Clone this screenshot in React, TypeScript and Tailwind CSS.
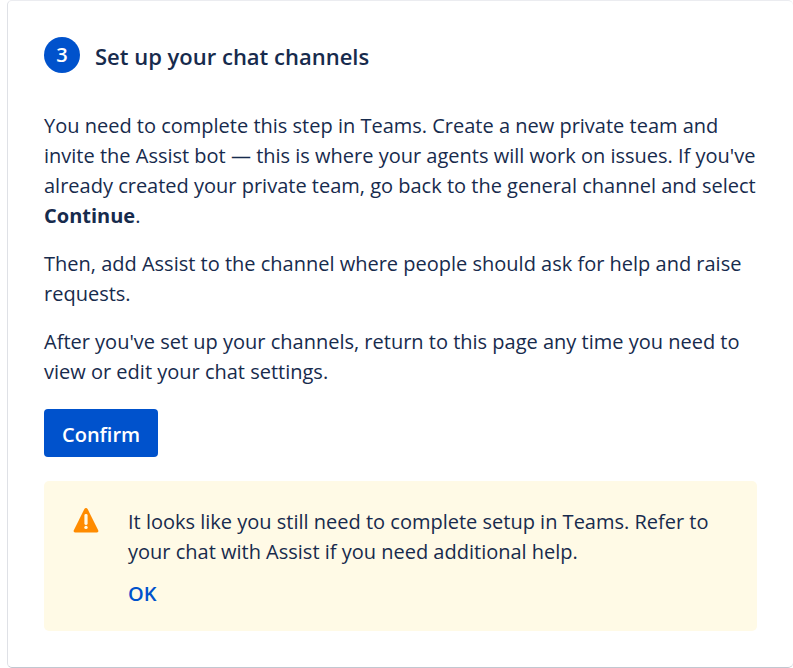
function WarningIcon() {
  return (
    <svg className="mt-px h-[25px] w-[26px] shrink-0" viewBox="0 0 26 25" aria-hidden="true">
      <path
        d="M11.4 1.1a1.8 1.8 0 0 1 3.2 0l10.6 21.1c.6 1.2-.1 2.3-1.4 2.3H2.2c-1.3 0-2-1.1-1.4-2.3z"
        fill="#ff8b00"
      />
      <rect x="11.4" y="6" width="3.2" height="11" rx="1.4" fill="#fffae6" />
      <circle cx="13" cy="19.4" r="1.7" fill="#fffae6" />
    </svg>
  );
}

export default function App() {
  return (
    <main className="bg-white pl-[7px] font-['Open_Sans','Noto_Sans',sans-serif] text-[20px] leading-[30px] text-[#172b4d]">
      <section className="rounded-[5px] border border-r-0 border-[#ebecf0] border-b-[#c1c7d0] border-l-[#dfe1e6] px-9 pt-9 pb-9">
        <header className="flex items-center gap-[15px]">
          <span className="flex size-9 items-center justify-center rounded-full bg-[#0052cc] font-semibold text-white">
            3
          </span>
          <h2 className="pt-0.5 text-[22px] leading-8 font-semibold">Set up your chat channels</h2>
        </header>

        <div className="mt-[38px] space-y-[18px]">
          <p>
            You need to complete this step in Teams. Create a new private team and
            invite the Assist bot — this is where your agents will work on issues. If you've
            already created your private team, go back to the general channel and select{" "}
            <strong className="font-bold">Continue</strong>.
          </p>
          <p>Then, add Assist to the channel where people should ask for help and raise requests.</p>
          <p>
            After you've set up your channels, return to this page any time you need to
            view or edit your chat settings.
          </p>
        </div>

        <button
          type="button"
          className="mt-[22px] flex h-12 items-center rounded-[4px] bg-[#0052cc] px-[18px] pt-1 font-semibold text-white"
        >
          Confirm
        </button>

        <div role="alert" className="mt-6 flex gap-[29px] rounded-[5px] bg-[#fffae6] py-[26px] pr-6 pl-[29px]">
          <WarningIcon />
          <div>
            <p>
              It looks like you still need to complete setup in Teams. Refer to
              your chat with Assist if you need additional help.
            </p>
            <button type="button" className="mt-3 block h-[26px] font-semibold text-[#0052cc]">
              OK
            </button>
          </div>
        </div>
      </section>
    </main>
  );
}
